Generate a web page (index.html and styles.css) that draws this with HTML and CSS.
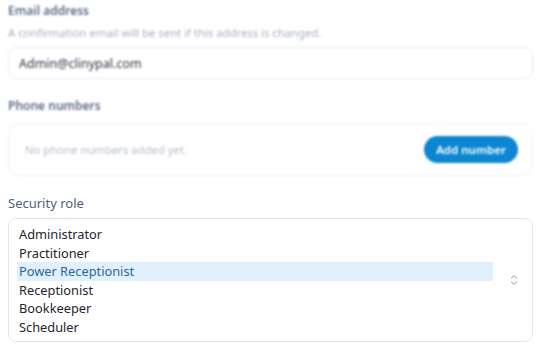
FILE: index.html
```html
<!DOCTYPE html>
<html>
<head>
<meta charset="utf-8">
<link rel="stylesheet" href="styles.css">
</head>
<body>
<div class="blurred">
  <div class="label">Email address</div>
  <div class="hint">A confirmation email will be sent if this address is changed.</div>
  <div class="input">Admin@clinypal.com</div>
  <div class="label label-phone">Phone numbers</div>
  <div class="phone-card">
    <span class="empty">No phone numbers added yet.</span>
    <span class="btn">Add number</span>
  </div>
</div>
<div class="role-label">Security role</div>
<div class="select">
  <div class="options">
    <div class="opt">Administrator</div>
    <div class="opt">Practitioner</div>
    <div class="opt sel">Power Receptionist</div>
    <div class="opt">Receptionist</div>
    <div class="opt">Bookkeeper</div>
    <div class="opt">Scheduler</div>
  </div>
  <svg class="chev" width="8" height="12" viewBox="0 0 8 12"><path d="M1 4.5 L4 1.5 L7 4.5 M1 7.5 L4 10.5 L7 7.5" fill="none" stroke="#b9c1cd" stroke-width="1.1"/></svg>
</div>
</body>
</html>
```
FILE: styles.css
```css
html, body { margin: 0; padding: 0; background: #fff; }
body { padding: 0 8px; font-family: "Noto Sans", "Open Sans", sans-serif; width: 525px; }
.blurred { filter: blur(1.1px); }
.label { font-size: 12px; font-weight: 600; color: #5d6c86; line-height: 16px; padding-top: 3px; }
.hint { font-size: 11.3px; color: #a7b1c2; line-height: 14px; margin-top: 7px; }
.input { margin-top: 7px; height: 30px; border: 1px solid #e6eaf1; border-radius: 8px; padding: 0 10px; display: flex; align-items: center; font-size: 12.5px; color: #2c3443; }
.label-phone { margin-top: 19px; padding-top: 0; }
.phone-card { margin-top: 9px; height: 51px; border: 1px solid #eef1f6; border-radius: 12px; display: flex; align-items: center; justify-content: space-between; padding: 0 14px 0 16px; }
.empty { font-size: 11.3px; color: #b4bdcc; }
.btn { background: #0d86d1; color: #fff; font-size: 11.5px; font-weight: 600; height: 27px; width: 94px; border-radius: 14px; display: flex; align-items: center; justify-content: center; }
.role-label { margin-top: 18px; font-family: "Noto Sans", sans-serif; font-size: 13px; color: #51607a; line-height: 18px; }
.select { margin-top: 6px; height: 122px; border: 1px solid #dfe5ee; border-radius: 8px; display: flex; align-items: center; padding: 0 0 0 8px; }
.options { width: 476px; align-self: flex-start; padding-top: 6px; }
.opt { font-size: 12.8px; line-height: 18.6px; color: #1f2430; padding-left: 2px; }
.opt.sel { background: #e0f0fc; color: #2b6899; }
.chev { margin-left: 17px; }
```
